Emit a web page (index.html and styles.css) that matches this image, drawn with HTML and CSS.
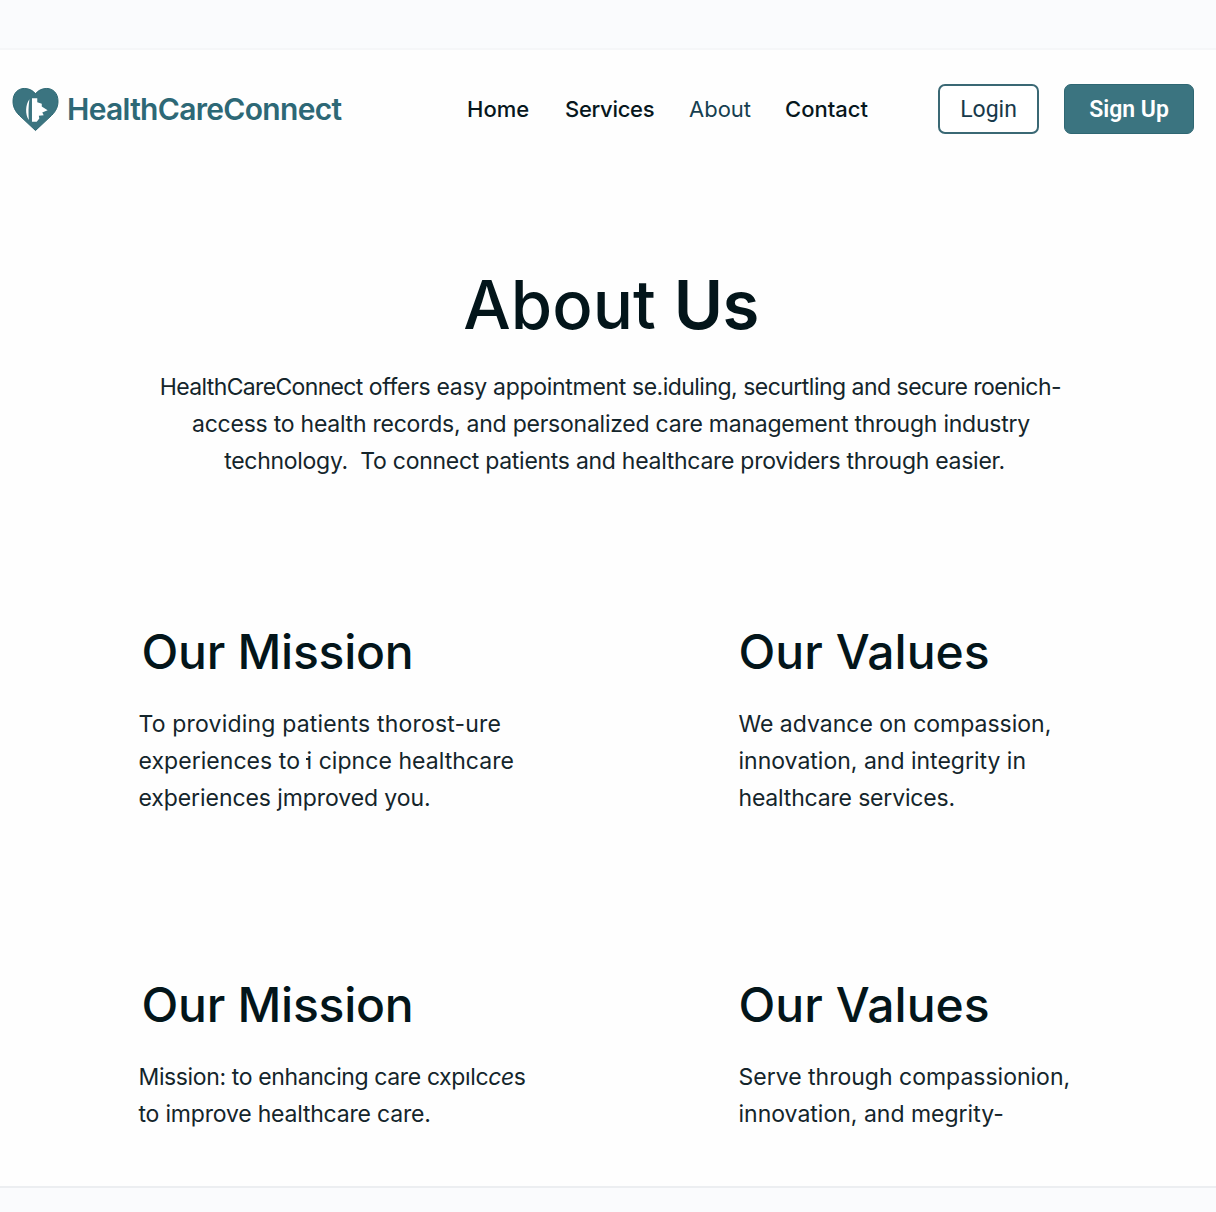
FILE: index.html
```
<!DOCTYPE html>
<html lang="en">
<head>
<meta charset="utf-8">
<title>HealthCareConnect</title>
<link rel="stylesheet" href="styles.css">
</head>
<body>
<div class="page">
  <header class="header">
    <a class="brand">
      <svg class="brand-mark" width="47" height="45" viewBox="0 0 48 46">
        <path d="M24 44.500 7.500 29C3 24.500 1 20 1 14.500 1 6.500 6 1.500 12.500 1.500c5 0 9 2 11.500 5.500 2.500-3.500 6.500-5.500 11.500-5.500C42 1.500 47 6.500 47 14.500c0 5.500-2 10-6.500 14.500Z" fill="#3b7480" stroke="#2a6571" stroke-width="1"/>
        <path d="M20.400 11.500h5.400v4l4.600 1.500v3l6 3.700-5.500 2.300 1.500 3-5 .5.500 2.800-2.700 3.200h-4.800Z" fill="#fff"/>
        <path d="M17.800 12.500c-4.200 5.500-4.500 15.500-.6 21.300-.5-7-.5-14 .6-21.300Z" fill="#fff"/>
      </svg>
      <span class="brand-name">HealthCareConnect</span>
    </a>
    <nav class="nav">
      <a class="nav-link home">Home</a>
      <a class="nav-link services">Services</a>
      <a class="nav-link about">About</a>
      <a class="nav-link contact">Contact</a>
    </nav>
    <div class="actions">
      <button class="btn btn-outline">Login</button>
      <button class="btn btn-solid">Sign Up</button>
    </div>
  </header>

  <main>
    <section class="intro">
      <h1>About <span class="heavy">Us</span></h1>
      <p class="copy">
        <span class="line i1"><span class="tight">HealthCareConnect</span> <span class="mid">offers easy appointment</span> <span class="end">se.iduling, securtling and secure roenich-</span></span>
        <span class="line i2">access to health records, and personalized care management through industry</span>
        <span class="line i3">technology.&nbsp; To connect patients and healthcare providers through easier.</span>
      </p>
    </section>

    <section class="grid">
      <article>
        <h2 class="mission">Our Mission</h2>
        <p class="copy">
          <span class="line p1">To providing patients thorost-ure</span>
          <span class="line p2">experiences to <span class="barred">i</span> cipnce healthcare</span>
          <span class="line p3">exþeriences jmproved you.</span>
        </p>
      </article>
      <article>
        <h2>Our Values</h2>
        <p class="copy">
          <span class="line">We advance on compassion,</span>
          <span class="line v2">innovation, and integrity in</span>
          <span class="line v3">healthcare services.</span>
        </p>
      </article>
      <article>
        <h2 class="mission">Our Mission</h2>
        <p class="copy">
          <span class="line m1">Mission: to enhancing care cxpılc<i>ce</i>s</span>
          <span class="line m2">to improve healthcare care.</span>
        </p>
      </article>
      <article>
        <h2>Our Values</h2>
        <p class="copy">
          <span class="line">Serve through compassionion,</span>
          <span class="line v2">innovation, and megrity-</span>
        </p>
      </article>
    </section>
  </main>
</div>
</body>
</html>
```

FILE: styles.css
```
* { box-sizing: border-box; }

body {
  margin: 0;
  padding: 48px 0 24px;
  min-height: 1212px;
  background: #fafbfd;
  color: #03151a;
  font-family: Inter, "Liberation Sans", sans-serif;
}

.page {
  height: 1140px;
  background: #fefefe;
  border-top: 2px solid #f5f6f8;
  border-bottom: 2px solid #eceef1;
}

.header {
  display: flex;
  align-items: center;
  height: 118px;
  padding: 0 22px 0 12px;
}

.brand {
  display: flex;
  align-items: center;
  gap: 8px;
  width: 455px;
  color: #2d6876;
}

.brand-mark { flex: none; }

.brand-name {
  font-size: 30px;
  line-height: 40px;
  font-weight: 600;
  letter-spacing: -0.69px;
}

.nav {
  display: flex;
  flex: 1;
  font-size: 22px;
  line-height: 30px;
  font-weight: 500;
  color: #07171d;
}

.home { width: 98px; }
.services { width: 124px; letter-spacing: -0.3px; }
.about { width: 96px; font-weight: 400; color: #163f50; }

.actions { display: flex; gap: 25px; }

.btn {
  height: 50px;
  padding: 0;
  border-radius: 7px;
  font-family: Roboto, sans-serif;
  font-size: 23px;
}

.btn-outline {
  width: 101px;
  border: 2px solid #3a6874;
  background: #fff;
  color: #17394a;
}

.btn-solid {
  width: 130px;
  border: 1px solid #2f6773;
  background: #3b7480;
  color: #fff;
  font-weight: 600;
}

h1, h2, p { margin: 0; }

.intro {
  padding-top: 97px;
  text-align: center;
}

h1 {
  padding-left: 6px;
  font-size: 67px;
  line-height: 80px;
  font-weight: 500;
}

.heavy { font-weight: 600; letter-spacing: -0.6px; }

.copy {
  font-size: 23px;
  line-height: 37px;
  color: #14252b;
}

.line { display: block; white-space: nowrap; }

.intro .copy { padding: 24px 0 0 5px; }
.i1 { letter-spacing: -0.5px; }
.tight { letter-spacing: -0.65px; }
.mid { letter-spacing: -0.3px; }
.end { letter-spacing: -0.52px; }
.i2 { padding-left: 1px; letter-spacing: -0.24px; }
.i3 { padding-left: 8px; letter-spacing: -0.28px; }

.grid {
  display: grid;
  grid-template-columns: 600px 1fr;
  grid-template-rows: 353px auto;
  padding: 142px 0 0 138.5px;
}

h2 {
  font-size: 48px;
  line-height: 60px;
  font-weight: 500;
  letter-spacing: 0.05px;
}

.mission { padding-left: 3px; letter-spacing: -0.25px; }

.grid .copy { padding-top: 24px; }

.barred { position: relative; }

.barred::before {
  content: "";
  position: absolute;
  left: -1px;
  top: 11px;
  width: 4px;
  height: 2px;
  background: #14252b;
}

.p1 { letter-spacing: 0.18px; }
.p2 { letter-spacing: 0.05px; }
.p3 { letter-spacing: -0.08px; }
.v3 { letter-spacing: -0.18px; }
.m1 { letter-spacing: -0.38px; }
.m2 { letter-spacing: -0.2px; }
```
